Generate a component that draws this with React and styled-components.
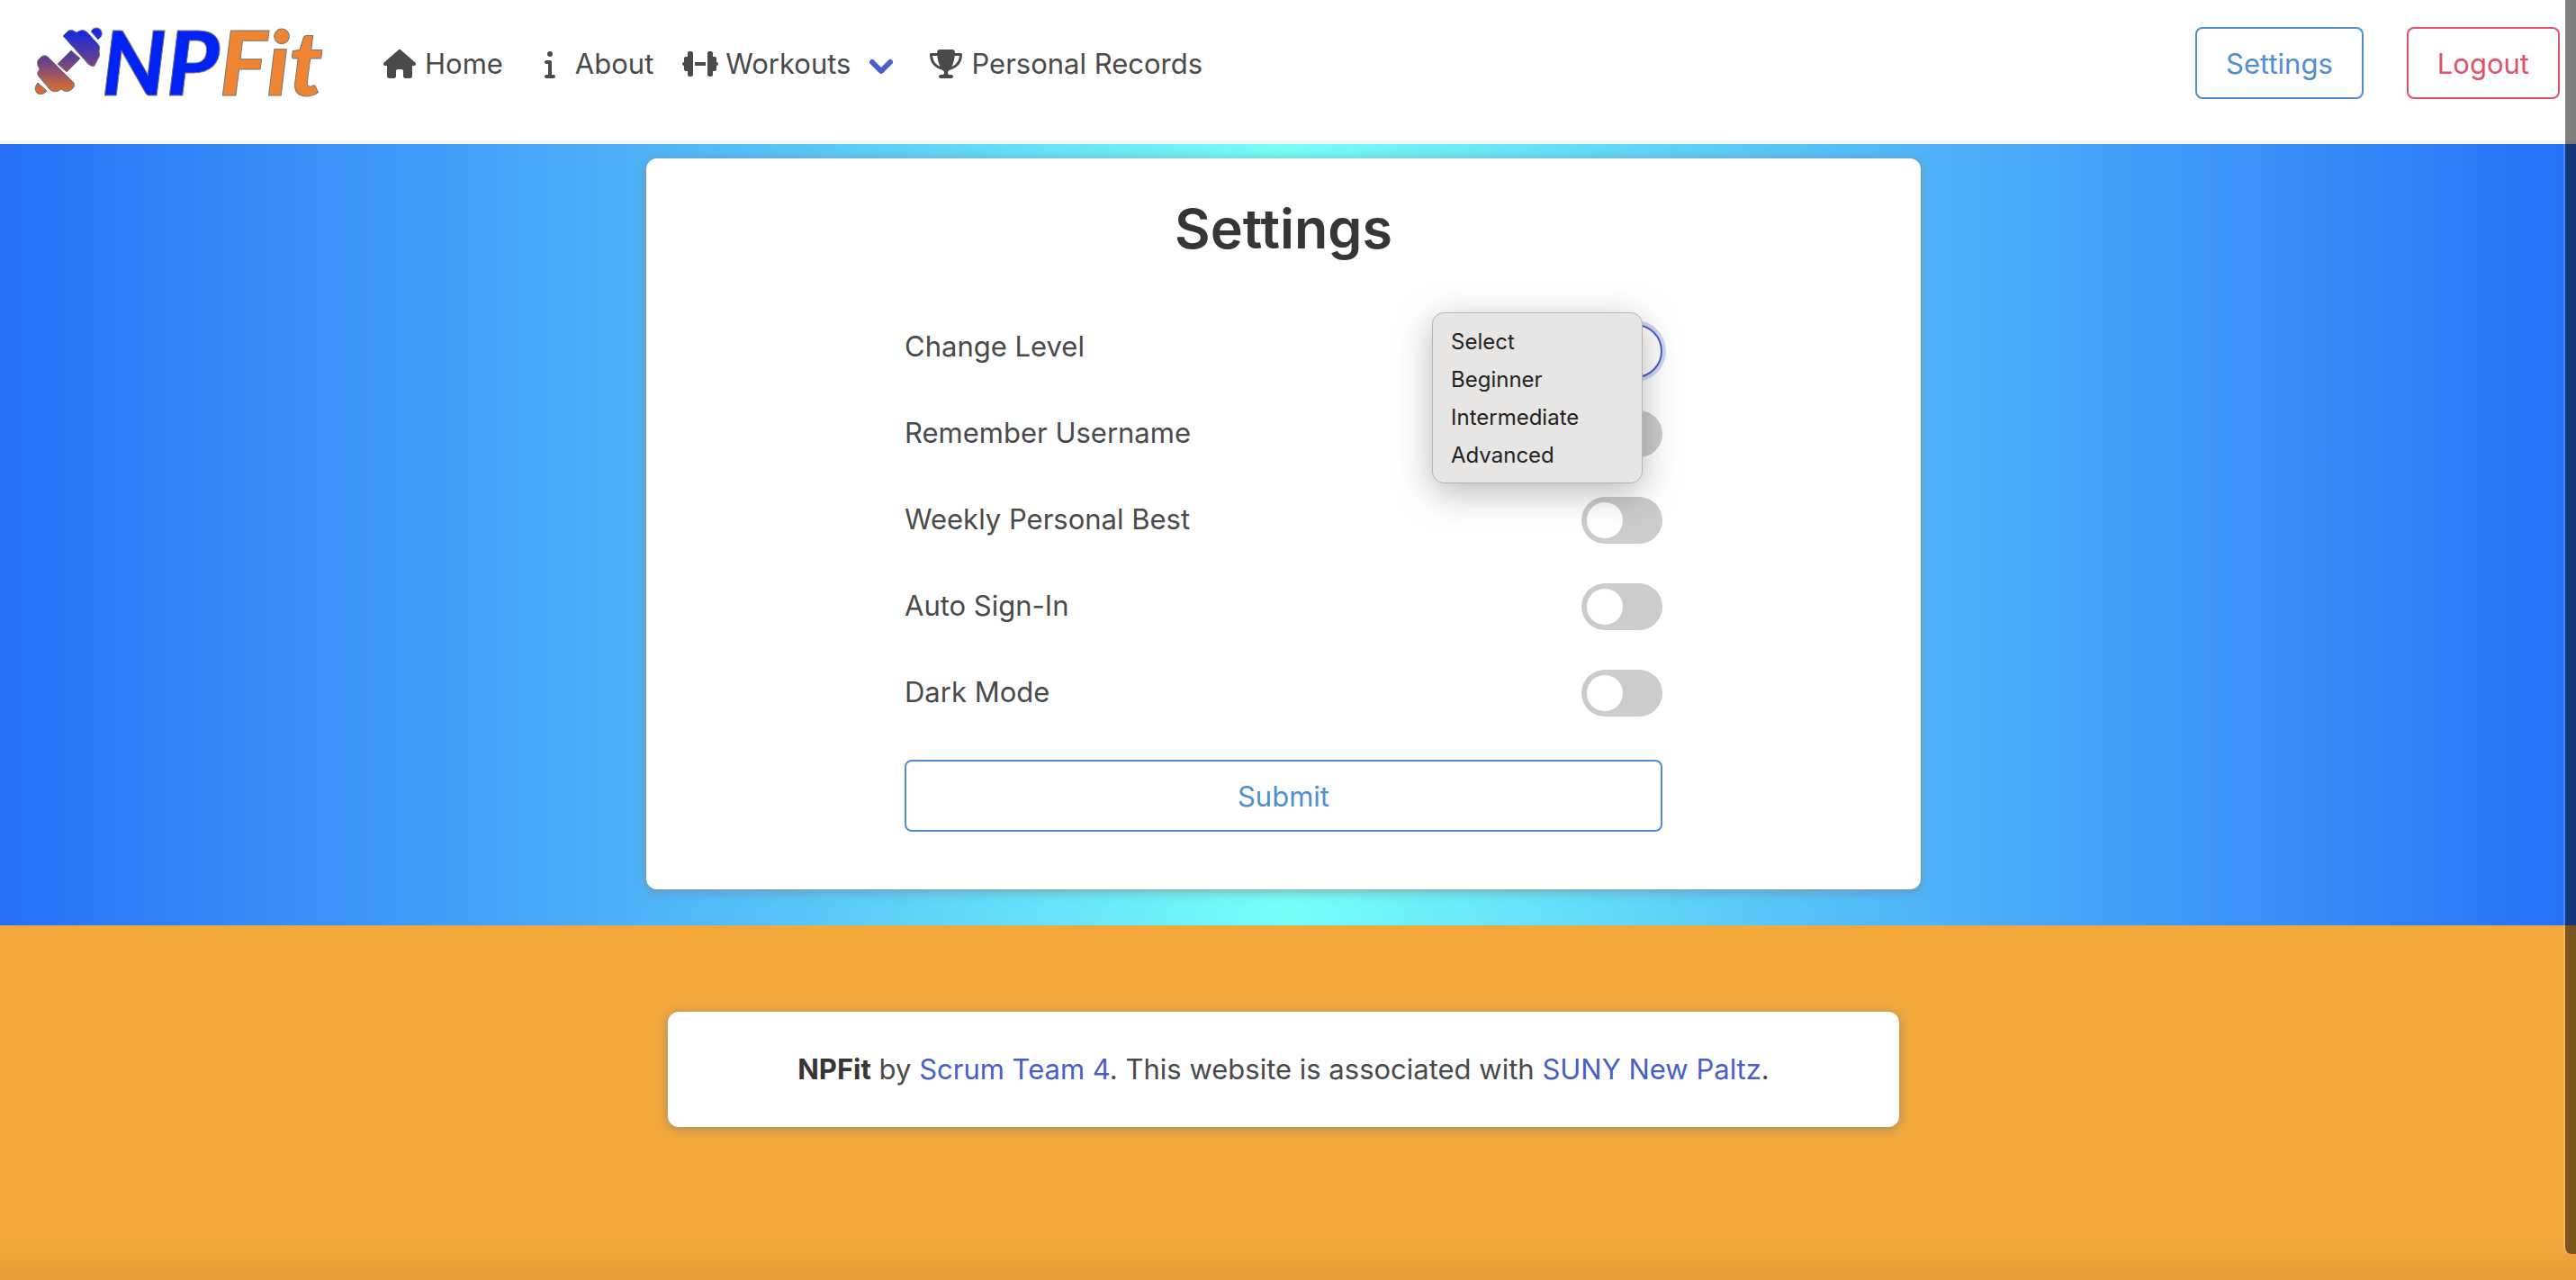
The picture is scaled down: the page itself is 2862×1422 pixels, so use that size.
import React from "react";
import styled, { createGlobalStyle } from "styled-components";
import { FaHouse, FaInfo, FaDumbbell, FaTrophy } from "react-icons/fa6";

const Global = createGlobalStyle`
  *, *::before, *::after { box-sizing: border-box; }
  body {
    margin: 0;
    font-family: Inter, "Liberation Sans", sans-serif;
    font-size: 31px;
    line-height: 48px;
    color: #4a4a4a;
    background: #f2a83b;
  }
`;

const Page = styled.div`
  position: relative;
  min-height: 100vh;
  display: flex;
  flex-direction: column;
`;

const Navbar = styled.header`
  display: flex;
  align-items: flex-start;
  height: 160px;
  padding: 0 18px 0 32px;
  background: #fff;
  border-bottom: 4px solid #f5f5f5;
`;

const LogoLink = styled.a`
  display: block;
  margin-right: 58px;
  svg { display: block; }
`;

const NavList = styled.nav`
  display: flex;
  align-items: center;
  height: 142px;
  flex: 1;
  gap: 28px;
`;

const NavLink = styled.a`
  display: flex;
  align-items: center;
  gap: 4px;
  color: inherit;
  text-decoration: none;
  white-space: nowrap;
`;

const IconBox = styled.span`
  display: flex;
  justify-content: center;
  width: 48px;
  svg { display: block; }
`;

const Arrow = styled.svg`
  display: block;
  margin: 0 6px 0 16px;
`;

const Actions = styled.div`
  display: flex;
  gap: 48px;
  padding-top: 30px;
`;

const Button = styled.button`
  height: 80px;
  width: ${(p) => (p.$full ? "100%" : "auto")};
  padding: 2px 32px 0;
  border: 2px solid ${(p) => p.$color};
  border-radius: 8px;
  background: #fff;
  color: ${(p) => p.$color};
  font: inherit;
`;

const Hero = styled.main`
  display: flex;
  justify-content: center;
  padding: 16px 10px 40px 0;
  background: linear-gradient(90deg, #2770f7 0%, #4eb3f9 25%, #76fff9 50%, #4eb3f9 75%, #2770f7 100%);
`;

const Card = styled.section`
  background: #fff;
  border-radius: 12px;
  box-shadow: 0 2px 12px rgba(128, 128, 128, 0.7);
`;

const SettingsCard = styled(Card)`
  width: 1416px;
  padding: 38px 0 64px;
`;

const Title = styled.h1`
  margin: 0 0 66px;
  text-align: center;
  font-size: 61px;
  line-height: 80px;
  font-weight: 600;
  color: #363636;
`;

const Form = styled.form`
  display: flex;
  flex-direction: column;
  width: 842px;
  margin: 0 auto;
`;

const Rows = styled.div`
  margin-bottom: 4px;
`;

const Row = styled.div`
  position: relative;
  display: flex;
  align-items: flex-start;
  justify-content: space-between;
  height: 96px;
  line-height: 50px;
`;

const LevelSelect = styled.select`
  appearance: none;
  width: 244px;
  height: 60px;
  padding: 0 32px;
  border: 2px solid #485fc7;
  border-radius: 30px;
  box-shadow: 0 0 0 4px rgba(72, 95, 199, 0.25);
  background: #fff;
  font: inherit;
  outline: none;
`;

const Menu = styled.ul`
  position: absolute;
  z-index: 2;
  top: -13px;
  right: 22px;
  width: 234px;
  margin: 0;
  padding: 11px 0 9px;
  list-style: none;
  border: 1px solid #b4b4b3;
  border-radius: 13px;
  background: #e7e6e4;
  box-shadow: 0 10px 40px rgba(0, 0, 0, 0.28);
  font-size: 24px;
  line-height: 42px;
  color: #222;
`;

const Option = styled.li`
  padding: 0 20px;
`;

const Switch = styled.input`
  appearance: none;
  width: 90px;
  height: 52px;
  margin: 0;
  padding: 6px;
  border-radius: 26px;
  background: #ccc;
  &::before {
    content: "";
    display: block;
    width: 40px;
    height: 40px;
    border-radius: 50%;
    background: #fff;
  }
`;

const Footer = styled.footer`
  flex: 1;
  display: flex;
  justify-content: center;
  align-items: flex-start;
  padding: 96px 10px 0 0;
  background: linear-gradient(rgba(0, 0, 0, 0) calc(100% - 48px), rgba(0, 0, 0, 0.05)), #f2a83b;
`;

const FooterCard = styled(Card)`
  width: 1368px;
  padding: 40px;
  text-align: center;
  a { color: #485fc7; text-decoration: none; }
  strong { color: #363636; font-weight: 700; }
`;

const ScrollThumb = styled.div`
  position: absolute;
  top: 0;
  right: 0;
  width: 14px;
  height: 1393px;
  border-left: 2px solid rgba(255, 255, 255, 0.15);
  border-bottom-left-radius: 8px;
  background: rgba(0, 0, 0, 0.5);
  background-clip: padding-box;
`;

function Logo() {
  return (
    <svg width="330" height="150" viewBox="32 0 330 150" role="img" aria-label="NPFit">
      <defs>
        <linearGradient id="bell" x1="0" y1="30" x2="0" y2="105" gradientUnits="userSpaceOnUse">
          <stop offset="0" stopColor="#0a24f0" />
          <stop offset="0.5" stopColor="#67408c" />
          <stop offset="0.9" stopColor="#cf6c37" />
        </linearGradient>
      </defs>
      <g fill="url(#bell)" stroke="#777" strokeWidth="1">
        <path d="M101 35 C104 29 112 30 113 36 C114 40 111 42 109 44 Z" />
        <path d="M70 40 L76 34 Q80 32 85 36 Q92 31 97 36 L109 49 Q112 52 110 57 Q112 62 108 67 L105 73 Q102 75 98 71 Z" />
        <path d="M64 71 L79 56 L89 65 L74 80 Z" />
        <path d="M46 63 Q50 60 54 64 L82 92 Q84 96 80 99 Q74 104 68 99 Q62 104 56 100 L43 85 Q40 81 44 77 Q40 71 42 67 Z" />
        <path d="M42 92 L52 101 Q48 106 42 104 Q36 99 42 92 Z" />
      </g>
      <text x="113" y="106" fontFamily="Lato, sans-serif" fontStyle="italic" fontWeight="900" fontSize="100" stroke="#777" strokeWidth="1">
        <tspan fill="#0022f5">NP</tspan><tspan fill="#ef8532">Fit</tspan>
      </text>
    </svg>
  );
}

const toggles = ["Remember Username", "Weekly Personal Best", "Auto Sign-In", "Dark Mode"];
const levels = ["Select", "Beginner", "Intermediate", "Advanced"];

export default function App() {
  return (
    <>
      <Global />
      <Page>
        <Navbar>
          <LogoLink href="#home"><Logo /></LogoLink>
          <NavList>
            <NavLink href="#home"><IconBox><FaHouse size={36} /></IconBox>Home</NavLink>
            <NavLink href="#about"><IconBox><FaInfo size={32} /></IconBox>About</NavLink>
            <NavLink href="#workouts">
              <IconBox><FaDumbbell size={40} /></IconBox>Workouts
              <Arrow width="28" height="28" viewBox="0 0 28 28" fill="none" stroke="#485fc7" strokeWidth="6" strokeLinecap="round" strokeLinejoin="round"><path d="M4 12 L14 22 L24 12" /></Arrow>
            </NavLink>
            <NavLink href="#records"><IconBox><FaTrophy size={36} /></IconBox>Personal Records</NavLink>
          </NavList>
          <Actions>
            <Button type="button" $color="#4f8fd0">Settings</Button>
            <Button type="button" $color="#e0526c">Logout</Button>
          </Actions>
        </Navbar>
        <Hero>
          <SettingsCard>
            <Title>Settings</Title>
            <Form>
              <Rows>
                <Row>
                  <label htmlFor="level">Change Level</label>
                  <LevelSelect id="level"><option value=""></option></LevelSelect>
                  <Menu>
                    {levels.map((level) => <Option key={level}>{level}</Option>)}
                  </Menu>
                </Row>
                {toggles.map((toggle) => {
                  const id = toggle.toLowerCase().replace(/ /g, "-");
                  return (
                    <Row key={toggle}>
                      <label htmlFor={id}>{toggle}</label>
                      <Switch type="checkbox" role="switch" id={id} />
                    </Row>
                  );
                })}
              </Rows>
              <Button type="submit" $full $color="#4f8fd0">Submit</Button>
            </Form>
          </SettingsCard>
        </Hero>
        <Footer>
          <FooterCard>
            <strong>NPFit</strong> by <a href="#team">Scrum Team 4</a>. This website is associated with <a href="#suny">SUNY New Paltz</a>.
          </FooterCard>
        </Footer>
        <ScrollThumb />
      </Page>
    </>
  );
}
